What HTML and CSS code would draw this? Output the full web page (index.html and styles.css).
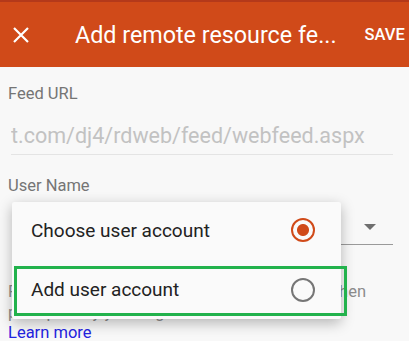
FILE: index.html
```html
<!DOCTYPE html>
<html lang="en">
<head>
  <meta charset="UTF-8">
  <title>Add remote resource feed</title>
  <link rel="stylesheet" href="styles.css">
</head>
<body>
  <div class="toolbar">
    <svg class="close-icon" width="16" height="16" viewBox="0 0 16 16">
      <path d="M1 1 L15 15 M15 1 L1 15" stroke="#fff" stroke-width="2.2" fill="none"/>
    </svg>
    <div class="toolbar-title">Add remote resource fe...</div>
    <div class="toolbar-action">SAVE</div>
  </div>

  <div class="content">
    <div class="field-label">Feed URL</div>
    <div class="field-value">t.com/dj4/rdweb/feed/webfeed.aspx</div>

    <div class="field-label user-label">User Name</div>
    <div class="select-row">
      <span class="select-arrow"></span>
    </div>

    <p class="hint">For feeds which use a user account, sign in when<br>prompted by your organization.<br><a href="#">Learn more</a></p>

    <!-- menu opened over the user name field -->
    <div class="menu">
      <div class="menu-item">
        <span>Choose user account</span>
        <span class="radio checked"></span>
      </div>
      <div class="menu-item highlighted">
        <span>Add user account</span>
        <span class="radio"></span>
      </div>
    </div>
  </div>
</body>
</html>
```

FILE: styles.css
```css
body {
  margin: 0;
  background-color: #f8f8f8;
  font-family: Roboto, "Noto Sans", sans-serif;
  width: 409px;
  height: 341px;
  overflow: hidden;
}
.toolbar {
  display: flex;
  align-items: center;
  height: 65px;
  border-top: 2px solid #b4391a;
  background-color: #d04a19;
  color: #fff;
}
.close-icon {
  margin-left: 13px;
  flex-shrink: 0;
}
.toolbar-title {
  margin-left: 46px;
  font-size: 23.3px;
  white-space: nowrap;
}
.toolbar-action {
  margin-left: 28px;
  font-size: 16.5px;
  font-weight: 500;
  white-space: nowrap;
}
.content {
  position: relative;
  padding: 0 16px 0 8px;
}
.field-label {
  padding-top: 17px;
  font-size: 16.5px;
  line-height: 20px;
  color: #757575;
}
.field-value {
  margin: 19px 0 0 3px;
  padding-bottom: 5px;
  border-bottom: 1px solid #e4e4e4;
  font-size: 21.5px;
  line-height: 26px;
  color: #c2c2c2;
  white-space: nowrap;
  overflow: hidden;
}
.user-label {
  padding-top: 21px;
}
.select-row {
  display: flex;
  justify-content: flex-end;
  align-items: flex-end;
  height: 49px;
  padding-bottom: 14px;
  box-sizing: border-box;
  margin-left: 4px;
  border-bottom: 1px solid #9a9a9a;
}
.select-arrow {
  width: 0;
  height: 0;
  margin-right: 17px;
  border-left: 6px solid transparent;
  border-right: 6px solid transparent;
  border-top: 6px solid #6f6f6f;
}
.hint {
  margin: 37px 0 0;
  font-size: 16.5px;
  line-height: 20.5px;
  color: #8c8c8c;
  white-space: nowrap;
}
.hint a {
  color: #2424e0;
  text-decoration: none;
}
.menu {
  position: absolute;
  left: 12px;
  top: 135px;
  width: 329px;
  padding: 4px 0 3px;
  background-color: #fafafa;
  border-radius: 2px;
  box-shadow: 0 4px 14px rgba(0, 0, 0, 0.28);
}
.menu-item {
  display: flex;
  justify-content: space-between;
  align-items: center;
  height: 48px;
  padding: 0 26px 0 19px;
  font-size: 19px;
  color: #222;
}
.menu-item.highlighted {
  margin: 12px -6px 0 2px;
  height: 41px;
  padding: 0 29px 3px 14px;
  box-sizing: content-box;
  border: 3px solid #22b24c;
}
.radio {
  box-sizing: border-box;
  width: 24px;
  height: 24px;
  border: 2.5px solid #767676;
  border-radius: 50%;
}
.radio.checked {
  border-color: #d04a19;
  background: radial-gradient(circle, #d04a19 0 5.5px, transparent 6.5px);
}
```
